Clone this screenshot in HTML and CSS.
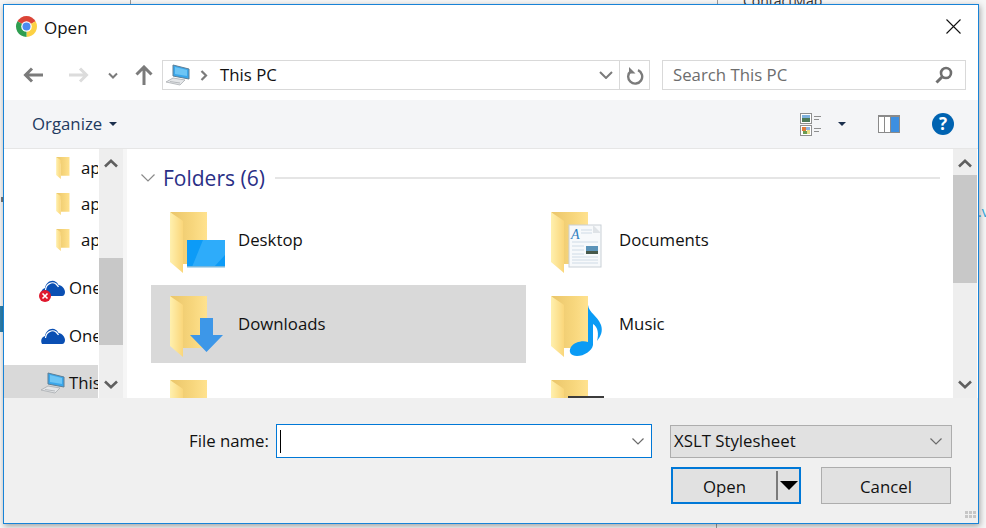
FILE: index.html
```html
<!DOCTYPE html>
<html lang="en">
<head>
    <meta charset="UTF-8">
    <meta name="viewport" content="width=device-width, initial-scale=1.0">
    <title>Open</title>
    <link rel="stylesheet" href="styles.css">
</head>
<body>
    <!-- bits of the window behind the dialog -->
    <div class="behind behind-line-a"></div>
    <div class="behind behind-line-b"></div>
    <div class="behind behind-line-c"></div>
    <div class="behind behind-strip"></div>
    <div class="behind behind-dot"></div>
    <div class="behind behind-name">ContactMap</div>
    <div class="behind behind-link">.v</div>

    <svg class="defs" width="0" height="0">
        <defs>
            <linearGradient id="folder-back" x1="0" x2="1" y1="0" y2="0">
                <stop offset="0" stop-color="#eac56a"/>
                <stop offset="0.6" stop-color="#f7d67c"/>
                <stop offset="1" stop-color="#ffe28f"/>
            </linearGradient>
            <linearGradient id="folder-flap" x1="0" x2="1" y1="0" y2="0">
                <stop offset="0" stop-color="#fff0ae"/>
                <stop offset="1" stop-color="#fad67a"/>
            </linearGradient>
            <symbol id="folder" viewBox="0 0 38 61">
                <path d="M0 0H37V52H13V20Z" fill="url(#folder-back)"/>
                <path d="M0 0C4 3 9 6 13 9V61L0 50Z" fill="url(#folder-flap)"/>
            </symbol>
            <symbol id="computer" viewBox="0 0 24 22">
                <path d="M7 1L23 5V15L7 12Z" fill="#3aa6ea" stroke="#5f7f95"/>
                <path d="M9 3L21 6V12L9 10Z" fill="#6cc5f5"/>
                <path d="M0 18L7 14L19 16L14 21Z" fill="#e4e6e8" stroke="#a9adb1" stroke-width="0.8"/>
                <path d="M4 17.500L14 19" stroke="#a9adb1" stroke-width="0.8"/>
            </symbol>
            <symbol id="cloud" viewBox="0 0 24 18">
                <path d="M1 17C-1 13 1 10 4 9C5 3 11 0 15 3C16 3.500 17 5 17.500 6C21 6 24 10 24 13C24 15 23 17 21 17Z" fill="#0a4fb3"/>
                <path d="M4.500 11C5 5 11 2 15 5C16 6 17 7 17.500 8" fill="none" stroke="#fff" stroke-width="1.200"/>
            </symbol>
        </defs>
    </svg>

    <div class="dialog">
        <div class="title-bar">
            <svg class="chrome-logo" width="23" height="23" viewBox="0 0 24 24">
                <path d="M12 12L2.500 6.500A11 11 0 0 1 21.500 6.500Z" fill="#db4437"/>
                <path d="M12 12L21.500 6.500A11 11 0 0 1 12 23Z" fill="#fcd144"/>
                <path d="M12 12L12 23A11 11 0 0 1 2.500 6.500Z" fill="#2f9e51"/>
                <circle cx="12" cy="12" r="5.500" fill="#fff"/>
                <circle cx="12" cy="12" r="4.200" fill="#4b8bf0"/>
            </svg>
            <span class="title-text">Open</span>
            <svg class="close-icon" width="15" height="15" viewBox="0 0 15 15">
                <path d="M0.500 0.500L14.500 14.500M14.500 0.500L0.500 14.500" stroke="#111" stroke-width="1.100"/>
            </svg>
        </div>

        <div class="address-row">
            <svg class="nav-arrow" width="20" height="16" viewBox="0 0 20 16">
                <path d="M20 8H3M9 1.500L2.500 8L9 14.500" fill="none" stroke="#7b7b7b" stroke-width="3"/>
            </svg>
            <svg class="nav-arrow forward" width="20" height="16" viewBox="0 0 20 16">
                <path d="M0 8H17M11 1.500L17.500 8L11 14.500" fill="none" stroke="#dcdcdc" stroke-width="3"/>
            </svg>
            <svg class="nav-drop" width="10" height="7" viewBox="0 0 10 7">
                <path d="M1 1.500L5 5.500L9 1.500" fill="none" stroke="#7b7b7b" stroke-width="2"/>
            </svg>
            <svg class="nav-up" width="18" height="20" viewBox="0 0 18 20">
                <path d="M9 20V3M1.500 9.500L9 2L16.500 9.500" fill="none" stroke="#7b7b7b" stroke-width="3"/>
            </svg>
            <div class="address-box">
                <svg class="pc-icon" width="24" height="22"><use href="#computer"/></svg>
                <svg class="crumb" width="8" height="11" viewBox="0 0 8 11">
                    <path d="M1.500 1L6 5.500L1.500 10" fill="none" stroke="#7b7b7b" stroke-width="2.200"/>
                </svg>
                <span class="crumb-text">This PC</span>
                <svg class="address-drop" width="14" height="8" viewBox="0 0 14 8">
                    <path d="M1 1L7 7L13 1" fill="none" stroke="#7b7b7b" stroke-width="2"/>
                </svg>
                <div class="refresh">
                    <svg width="18" height="19" viewBox="0 0 18 19">
                        <path d="M5 5A7 7 0 1 0 12 4.200" fill="none" stroke="#7b7b7b" stroke-width="2.400"/>
                        <path d="M3 1V7.500H9.500Z" fill="#7b7b7b"/>
                    </svg>
                </div>
            </div>
            <div class="search-box">
                <span class="search-text">Search This PC</span>
                <svg width="18" height="18" viewBox="0 0 18 18">
                    <circle cx="11" cy="7" r="5" fill="none" stroke="#6f6f6f" stroke-width="2.600"/>
                    <path d="M7.500 10.500L1.500 16.500" stroke="#6f6f6f" stroke-width="3"/>
                </svg>
            </div>
        </div>

        <div class="toolbar">
            <span class="organize">Organize</span>
            <span class="toolbar-caret organize-caret"></span>
            <div class="toolbar-right">
                <svg class="view-icon" width="22" height="23" viewBox="0 0 22 23">
                    <rect x="0.500" y="0.500" width="11" height="10" fill="#fff" stroke="#8f8f8f"/>
                    <rect x="2" y="2" width="8" height="3" fill="#7fb1dd"/>
                    <rect x="2" y="5" width="8" height="4" fill="#4d7a58"/>
                    <rect x="0.500" y="12.500" width="11" height="10" fill="#fff" stroke="#8f8f8f"/>
                    <rect x="2" y="14" width="4" height="4" fill="#df7a3a"/>
                    <rect x="6" y="14" width="4" height="3" fill="#8fb3e0"/>
                    <rect x="3" y="18" width="4" height="3" fill="#6a9c52"/>
                    <rect x="7" y="17" width="3" height="4" fill="#e9e08a"/>
                    <path d="M14 3.500H21M14 6.500H19M14 15.500H21M14 18.500H19" stroke="#8f8f8f"/>
                </svg>
                <span class="toolbar-caret view-caret"></span>
                <svg class="pane-icon" width="22" height="18" viewBox="0 0 22 18">
                    <rect width="22" height="18" fill="#8a8a8a"/>
                    <rect x="1" y="2" width="5" height="15" fill="#fff"/>
                    <rect x="7" y="2" width="5" height="15" fill="#fff"/>
                    <rect x="13" y="2" width="8" height="15" fill="#3d8fe0"/>
                </svg>
                <span class="help-icon">?</span>
            </div>
        </div>

        <div class="main">
            <div class="nav-pane">
                <div class="nav-row">
                    <svg class="nav-folder" width="14" height="22"><use href="#folder"/></svg>
                    <span>apps</span>
                </div>
                <div class="nav-row">
                    <svg class="nav-folder" width="14" height="22"><use href="#folder"/></svg>
                    <span>apps</span>
                </div>
                <div class="nav-row">
                    <svg class="nav-folder" width="14" height="22"><use href="#folder"/></svg>
                    <span>apps</span>
                </div>
                <div class="nav-row spaced">
                    <div class="nav-cloud">
                        <svg width="24" height="18"><use href="#cloud"/></svg>
                        <svg class="cloud-error" width="12" height="12" viewBox="0 0 12 12">
                            <circle cx="6" cy="6" r="6" fill="#e0182d"/>
                            <path d="M3.500 3.500L8.500 8.500M8.500 3.500L3.500 8.500" stroke="#fff" stroke-width="1.600"/>
                        </svg>
                    </div>
                    <span>OneDrive</span>
                </div>
                <div class="nav-row spaced">
                    <div class="nav-cloud">
                        <svg width="24" height="18"><use href="#cloud"/></svg>
                    </div>
                    <span>OneDrive</span>
                </div>
                <div class="nav-row selected">
                    <div class="nav-cloud">
                        <svg width="24" height="22"><use href="#computer"/></svg>
                    </div>
                    <span>This PC</span>
                </div>
            </div>
            <div class="scrollbar nav-scroll">
                <svg class="chevron" width="14" height="9" viewBox="0 0 14 9"><path d="M1 7.500L7 1.800L13 7.500" fill="none" stroke="#5f5f5f" stroke-width="2.600"/></svg>
                <div class="thumb nav-thumb"></div>
                <svg class="chevron down" width="14" height="9" viewBox="0 0 14 9"><path d="M1 1.500L7 7.200L13 1.500" fill="none" stroke="#5f5f5f" stroke-width="2.600"/></svg>
            </div>
            <div class="pane-gap"></div>
            <div class="file-list">
                <div class="group-head">
                    <svg width="14" height="8" viewBox="0 0 14 8"><path d="M0.500 0.500L7 7L13.500 0.500" fill="none" stroke="#8a8a8a" stroke-width="1.200"/></svg>
                    <span class="group-title">Folders (6)</span>
                    <div class="group-line"></div>
                </div>
                <div class="tiles">
                    <div class="tile">
                        <svg class="tile-icon" width="56" height="62" viewBox="0 0 56 62">
                            <use href="#folder" width="38" height="61"/>
                            <rect x="17" y="28" width="38" height="27" fill="#0c9bf7"/>
                            <path d="M33 28H55V43L44 55H22Z" fill="#2eacfa"/>
                            <rect x="17" y="54" width="38" height="1.500" fill="#79b7dc"/>
                        </svg>
                        <span>Desktop</span>
                    </div>
                    <div class="tile">
                        <svg class="tile-icon" width="56" height="62" viewBox="0 0 56 62">
                            <use href="#folder" width="38" height="61"/>
                            <rect x="18" y="13" width="32" height="42" fill="#f7f9fb" stroke="#c9d0d6"/>
                            <path d="M42 13L50 21H42Z" fill="#dfe3e7"/>
                            <path d="M30 18H41M30 21H41M21 30H47M21 45H47M21 48H47M21 51H47M21 34H33M21 38H33M21 42H33" stroke="#cfdbe6"/>
                            <text x="20" y="27" class="doc-letter">A</text>
                            <rect x="35" y="34" width="12" height="8" fill="#5b93b8"/>
                            <rect x="35" y="39" width="12" height="3" fill="#46584a"/>
                        </svg>
                        <span>Documents</span>
                    </div>
                    <div class="tile picked">
                        <svg class="tile-icon" width="56" height="62" viewBox="0 0 56 62">
                            <use href="#folder" width="38" height="61"/>
                            <path d="M30 22H43V39H53L36.500 56L20 39H30Z" fill="#3d97e8"/>
                        </svg>
                        <span>Downloads</span>
                    </div>
                    <div class="tile">
                        <svg class="tile-icon" width="56" height="62" viewBox="0 0 56 62">
                            <use href="#folder" width="38" height="61"/>
                            <path d="M37 9C38 17 46 19 50 29C52 35 50 40 46 45C48 38 47 31 42 28V49C41 55 33 60 26 60C20 60 17 56 20 51C23 46 32 44 37 46Z" fill="#0a9bf5"/>
                        </svg>
                        <span>Music</span>
                    </div>
                    <div class="tile">
                        <svg class="tile-icon" width="56" height="62" viewBox="0 0 56 62">
                            <use href="#folder" width="38" height="61"/>
                        </svg>
                        <span>Pictures</span>
                    </div>
                    <div class="tile">
                        <svg class="tile-icon" width="56" height="62" viewBox="0 0 56 62">
                            <use href="#folder" width="38" height="61"/>
                            <rect x="17" y="16" width="36" height="30" fill="#3b3b3b"/>
                            <rect x="22" y="18" width="26" height="26" fill="#3f5f8a"/>
                        </svg>
                        <span>Videos</span>
                    </div>
                </div>
            </div>
            <div class="scrollbar list-scroll">
                <svg class="chevron" width="14" height="9" viewBox="0 0 14 9"><path d="M1 7.500L7 1.800L13 7.500" fill="none" stroke="#5f5f5f" stroke-width="2.600"/></svg>
                <div class="thumb list-thumb"></div>
                <svg class="chevron down" width="14" height="9" viewBox="0 0 14 9"><path d="M1 1.500L7 7.200L13 1.500" fill="none" stroke="#5f5f5f" stroke-width="2.600"/></svg>
            </div>
        </div>

        <div class="footer">
            <div class="footer-row">
                <label class="file-label">File name:</label>
                <div class="file-input">
                    <div class="caret"></div>
                    <svg width="12" height="7" viewBox="0 0 12 7"><path d="M0.500 0.500L6 6L11.500 0.500" fill="none" stroke="#6b6b6b" stroke-width="1.200"/></svg>
                </div>
                <div class="file-type">
                    <span>XSLT Stylesheet</span>
                    <svg width="12" height="7" viewBox="0 0 12 7"><path d="M0.500 0.500L6 6L11.500 0.500" fill="none" stroke="#6b6b6b" stroke-width="1.200"/></svg>
                </div>
            </div>
            <div class="button-row">
                <div class="open-btn">
                    <span class="open-label">Open</span>
                    <div class="open-split"></div>
                    <span class="open-arrow"></span>
                </div>
                <div class="cancel-btn">Cancel</div>
            </div>
            <div class="grip">
                <i></i><i></i><i></i><i></i><i></i><i></i>
            </div>
        </div>
    </div>
</body>
</html>
```

FILE: styles.css
```css
body {
    font-family: "Open Sans", "Noto Sans", sans-serif;
    font-size: 16.8px;
    margin: 0;
    padding: 0;
    width: 986px;
    height: 528px;
    overflow: hidden;
    position: relative;
    background-color: #f6f6f6;
    color: #111;
}
svg {
    flex: none;
}
/* the font sits a pixel low in its line box */
.crumb-text,
.search-text,
.organize,
.tile span,
.nav-row span,
.file-label,
.file-type span {
    margin-bottom: 2px;
}
.defs {
    position: absolute;
}
.behind {
    position: absolute;
}
.behind-line-a {
    left: 130px;
    top: 0;
    width: 1px;
    height: 4px;
    background-color: #9a9a9a;
}
.behind-line-b {
    left: 716px;
    top: 524px;
    width: 1px;
    height: 4px;
    background-color: #9a9a9a;
}
.behind-line-c {
    left: 717px;
    top: 0;
    width: 1px;
    height: 4px;
    background-color: #9a9a9a;
}
.behind-strip {
    left: 0;
    top: 306px;
    width: 3px;
    height: 26px;
    background-color: #2b7fae;
}
.behind-dot {
    left: 1px;
    top: 197px;
    width: 2px;
    height: 5px;
    background-color: #777;
}
.behind-name {
    left: 743px;
    top: -9px;
    font-size: 14px;
    color: #333;
}
.behind-link {
    left: 978px;
    top: 202px;
    font-size: 14px;
    color: #2aa7dc;
}
.dialog {
    position: relative;
    width: 974px;
    height: 518px;
    margin: 4px 0 0 3px;
    border: 1px solid #1883d7;
    background-color: #fff;
    box-shadow: 1px 2px 6px rgba(0, 0, 0, 0.35);
    display: flex;
    flex-direction: column;
}
.title-bar {
    height: 45px;
    display: flex;
    align-items: center;
    padding: 0 17px 0 11px;
}
.chrome-logo,
.close-icon {
    margin-bottom: 2px;
}
.title-text {
    font-size: 17px;
    margin-left: 6px;
    flex: 1;
}
.address-row {
    height: 50px;
    display: flex;
    align-items: center;
    padding: 0 12px 0 19px;
}
.nav-arrow.forward {
    margin-left: 26px;
}
.nav-drop {
    margin-left: 19px;
}
.nav-up {
    margin-left: 17px;
}
.address-box {
    margin-left: 9px;
    width: 483px;
    height: 28px;
    border: 1px solid #d9d9d9;
    display: flex;
    align-items: center;
    padding-left: 3px;
}
.crumb {
    margin-left: 10px;
}
.crumb-text {
    margin-left: 12px;
    flex: 1;
}
.address-drop {
    margin-right: 6px;
}
.refresh {
    border-left: 1px solid #d9d9d9;
    height: 28px;
    width: 29px;
    display: flex;
    align-items: center;
    justify-content: center;
}
.search-box {
    margin-left: 12px;
    width: 280px;
    height: 28px;
    border: 1px solid #d9d9d9;
    display: flex;
    align-items: center;
    justify-content: space-between;
    padding: 0 12px 0 10px;
}
.search-text {
    color: #6d6d6d;
}
.toolbar {
    height: 48px;
    background-color: #f4f5f7;
    border-bottom: 1px solid #e6e6e6;
    display: flex;
    align-items: center;
    padding: 0 24px 0 28px;
}
.organize {
    color: #1f3a5f;
}
.toolbar-caret {
    width: 0;
    height: 0;
    border-left: 4px solid transparent;
    border-right: 4px solid transparent;
    border-top: 4px solid #1b2f4d;
}
.organize-caret {
    margin-left: 7px;
}
.toolbar-right {
    margin-left: auto;
    display: flex;
    align-items: center;
}
.view-caret {
    margin-left: 16px;
}
.pane-icon {
    margin-left: 32px;
}
.help-icon {
    margin-left: 32px;
    width: 22px;
    height: 22px;
    border-radius: 50%;
    background-color: #0063b1;
    color: #fff;
    font-weight: 700;
    font-size: 17px;
    line-height: 22px;
    text-align: center;
}
.main {
    height: 249px;
    display: flex;
    overflow: hidden;
}
.nav-pane {
    width: 94px;
    overflow: hidden;
    white-space: nowrap;
    margin-right: 1px;
    padding-top: 1px;
}
.nav-row {
    height: 36px;
    display: flex;
    align-items: center;
    padding-left: 52px;
    gap: 11px;
}
.nav-row.spaced {
    margin-top: 12px;
    padding-left: 37px;
    gap: 4px;
}
.nav-row.selected {
    margin-top: 11px;
    padding-left: 37px;
    gap: 4px;
    background-color: #d9d9d9;
}
.nav-cloud {
    position: relative;
    display: flex;
}
.cloud-error {
    position: absolute;
    left: -2px;
    bottom: -5px;
}
.scrollbar {
    background-color: #eeeeee;
    display: flex;
    flex-direction: column;
    align-items: center;
    position: relative;
}
.chevron {
    position: absolute;
    top: 10px;
}
.chevron.down {
    top: auto;
    bottom: 9px;
}
.thumb {
    position: absolute;
    left: 0;
    right: 0;
    background-color: #c8c8c8;
}
.nav-scroll {
    width: 24px;
}
.nav-thumb {
    top: 109px;
    height: 87px;
}
.pane-gap {
    width: 4px;
    background-color: #f6f6f6;
}
.file-list {
    width: 826px;
    overflow: hidden;
}
.group-head {
    height: 20px;
    margin-top: 19px;
    display: flex;
    align-items: center;
    padding-left: 14px;
}
.group-title {
    font-size: 21px;
    color: #2a2f86;
    margin-left: 8px;
}
.group-line {
    width: 665px;
    margin-left: 10px;
    height: 2px;
    background-color: #e5e5e5;
}
.tiles {
    margin-top: 13px;
    padding-left: 24px;
    display: grid;
    grid-template-columns: 375px 375px;
    column-gap: 6px;
    row-gap: 6px;
}
.tile {
    height: 78px;
    display: flex;
    align-items: center;
    padding-left: 19px;
    gap: 12px;
}
.tile.picked {
    background-color: #d9d9d9;
}
.tile-icon {
    margin-top: 6px;
    margin-bottom: 0;
}
.doc-letter {
    font-family: "Liberation Serif", serif;
    font-style: italic;
    font-size: 14px;
    fill: #2f7fc0;
}
.list-scroll {
    width: 24px;
    margin-right: 1px;
}
.list-thumb {
    top: 26px;
    height: 108px;
}
.footer {
    height: 125px;
    background-color: #f0f0f0;
    position: relative;
}
.footer-row {
    margin-top: 26px;
    display: flex;
    align-items: center;
    padding-left: 185px;
}
.file-label {
    width: 87px;
}
.file-input {
    width: 364px;
    height: 32px;
    border: 1px solid #0078d7;
    background-color: #fff;
    display: flex;
    align-items: center;
    justify-content: space-between;
    padding: 0 7px 0 3px;
}
.caret {
    width: 1px;
    height: 23px;
    background-color: #000;
}
.file-type {
    margin-left: 18px;
    width: 268px;
    height: 31px;
    border: 1px solid #adadad;
    background-color: #e1e1e1;
    display: flex;
    align-items: center;
    justify-content: space-between;
    padding: 0 9px 0 3px;
}
.button-row {
    margin-top: 9px;
    padding-left: 667px;
    display: flex;
    gap: 20px;
}
.open-btn {
    width: 126px;
    height: 33px;
    border: 2px solid #0078d7;
    background-color: #e1e1e1;
    display: flex;
    align-items: center;
}
.open-label {
    width: 103px;
    text-align: center;
    padding-top: 1px;
}
.open-split {
    width: 2px;
    height: 29px;
    background-color: #7a7a7a;
}
.open-arrow {
    margin-left: 2px;
    width: 0;
    height: 0;
    border-left: 9px solid transparent;
    border-right: 9px solid transparent;
    border-top: 9px solid #000;
}
.cancel-btn {
    width: 130px;
    height: 37px;
    padding-top: 1px;
    box-sizing: border-box;
    border: 1px solid #adadad;
    background-color: #e1e1e1;
    display: flex;
    align-items: center;
    justify-content: center;
}
.grip {
    position: absolute;
    right: 2px;
    bottom: 1px;
    width: 11px;
    height: 11px;
    display: grid;
    grid-template-columns: repeat(3, 3px);
    grid-template-rows: repeat(3, 3px);
    gap: 1px;
}
.grip i {
    background-color: #c6c6c6;
}
.grip i:nth-child(1) {
    grid-column: 3;
    grid-row: 1;
}
.grip i:nth-child(2) {
    grid-column: 2;
    grid-row: 2;
}
.grip i:nth-child(3) {
    grid-column: 3;
    grid-row: 2;
}
```
